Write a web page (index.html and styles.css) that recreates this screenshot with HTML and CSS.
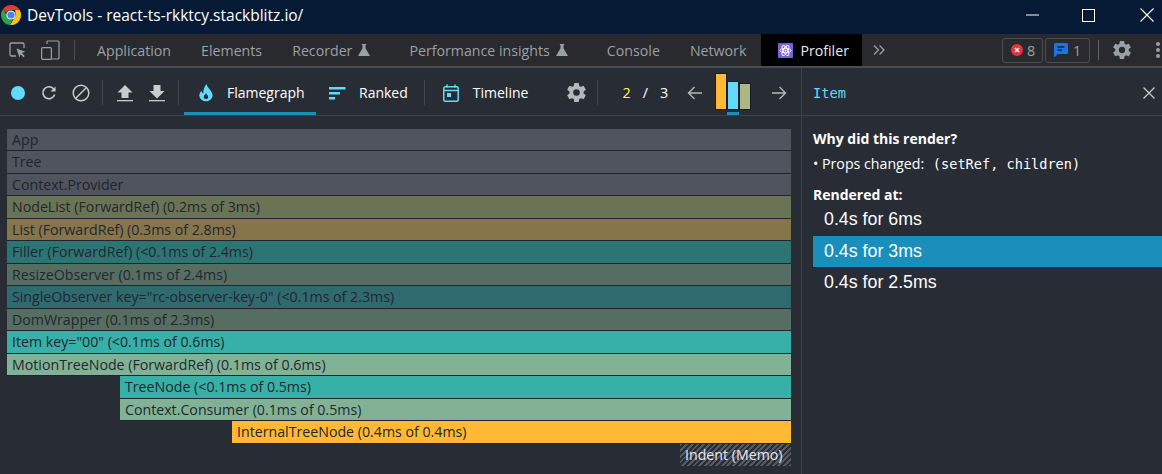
FILE: index.html
```html
<!DOCTYPE html>
<html lang="en">
<head>
<meta charset="utf-8">
<title>DevTools</title>
<link rel="stylesheet" href="styles.css">
</head>
<body>
<div class="app">
  <header class="titlebar">
    <svg class="chrome" viewBox="0 0 20 20" width="20" height="20">
      <path d="M10 0a10 10 0 0 1 8.660 5H10a5 5 0 0 0-4.500 2.900L2.200 3.800A10 10 0 0 1 10 0z" fill="#e33b2e"/>
      <path d="M18.660 5A10 10 0 0 1 9 19.950l4.300-6.900A5 5 0 0 0 14.400 7.400 5 5 0 0 0 14 5z" fill="#fbc116"/>
      <path d="M9 19.950A10 10 0 0 1 2.200 3.800l4 6.900a5 5 0 0 0 5.600 3.950L9 19.950z" fill="#2ba24c"/>
      <circle cx="10" cy="10" r="4.600" fill="#fff"/>
      <circle cx="10" cy="10" r="3.600" fill="#4285f4"/>
    </svg>
    <span class="title">DevTools - react-ts-rkktcy.stackblitz.io/</span>
    <div class="winctl">
      <svg class="wc-min" width="13" height="2" viewBox="0 0 13 2"><path d="M0 1h13" stroke="#fff" stroke-width="1"/></svg>
      <svg class="wc-max" width="13" height="13" viewBox="0 0 13 13"><rect x=".5" y=".5" width="12" height="12" fill="none" stroke="#fff"/></svg>
      <svg class="wc-close" width="14" height="14" viewBox="0 0 14 14"><path d="M.5.5l13 13M13.500.5l-13 13" stroke="#fff" stroke-width="1.100"/></svg>
    </div>
  </header>

  <nav class="tabbar">
    <svg class="dt-inspect" width="18" height="18" viewBox="0 0 18 18" fill="none"><path d="M7 15H2.500A1.500 1.500 0 0 1 1 13.500V3.500A1.500 1.500 0 0 1 2.500 2h11A1.500 1.500 0 0 1 15 3.500V7" stroke="#9aa0a6" stroke-width="1.300"/><path d="M7.500 7.500l9 3.200-3.700 1.300 3 3-1.300 1.300-3-3-1 3.500z" fill="#9aa0a6"/></svg>
    <svg class="dt-device" width="19" height="20" viewBox="0 0 19 20" fill="none" stroke="#9aa0a6" stroke-width="1.200"><path d="M6 4V2a1 1 0 0 1 1-1h10a1 1 0 0 1 1 1v16a1 1 0 0 1-1 1h-6"/><rect x=".6" y="7.600" width="9.800" height="11.800" rx="1"/></svg>
    <span class="vsep tab-sep"></span>
    <span class="tab tab-first">Application</span>
    <span class="tab">Elements</span>
    <span class="tab tab-exp"><span>Recorder</span><svg class="flask" width="12" height="12" viewBox="0 0 12 12"><path d="M3.800 0h4.400v1H7.500v3.300L12 12H0l4.500-7.700V1h-.7z" fill="#9aa0a6"/></svg></span>
    <span class="tab tab-exp"><span>Performance insights</span><svg class="flask" width="12" height="12" viewBox="0 0 12 12"><path d="M3.800 0h4.400v1H7.500v3.300L12 12H0l4.500-7.700V1h-.7z" fill="#9aa0a6"/></svg></span>
    <span class="tab">Console</span>
    <span class="tab">Network</span>
    <span class="tab-active">
      <svg width="15" height="15" viewBox="0 0 15 15"><rect width="15" height="15" rx="1" fill="#7a5fd6"/><g fill="none" stroke="#fff" stroke-width=".9"><ellipse cx="7.500" cy="7.500" rx="5.500" ry="2.200"/><ellipse cx="7.500" cy="7.500" rx="5.500" ry="2.200" transform="rotate(60 7.500 7.500)"/><ellipse cx="7.500" cy="7.500" rx="5.500" ry="2.200" transform="rotate(120 7.500 7.500)"/></g><circle cx="7.500" cy="7.500" r="1.100" fill="#fff"/></svg>
      <span>Profiler</span>
    </span>
    <svg class="more" width="12" height="10" viewBox="0 0 12 10" fill="none" stroke="#9aa0a6" stroke-width="1.300"><path d="M1 .5L5.500 5 1 9.500M6.500.5L11 5l-4.500 4.500"/></svg>
    <div class="tab-right">
      <span class="badge badge-err">
        <svg width="12" height="12" viewBox="0 0 12 12"><circle cx="6" cy="6" r="6" fill="#e8333c"/><path d="M4 4l4 4M8 4l-4 4" stroke="#fff" stroke-width="1.400"/></svg>
        <span>8</span>
      </span>
      <span class="badge badge-msg">
        <svg width="14" height="14" viewBox="0 0 14 14"><path d="M1.500 0h11A1.500 1.500 0 0 1 14 1.500v8a1.500 1.500 0 0 1-1.500 1.500H4l-4 3.500v-13A1.500 1.500 0 0 1 1.500 0z" fill="#1a73e8"/><path d="M3.500 4h7M3.500 7h4.500" stroke="#202124" stroke-width="1.300"/></svg>
        <span>1</span>
      </span>
      <span class="vsep sep-right"></span>
      <svg class="gear-top" width="18" height="18" viewBox="2 2 20 20"><path fill="#9aa0a6" d="M19.430 12.980c.04-.32.07-.64.07-.98s-.03-.66-.07-.98l2.110-1.650a.5.5 0 0 0 .12-.64l-2-3.460a.5.5 0 0 0-.61-.22l-2.490 1a7.300 7.300 0 0 0-1.690-.98l-.38-2.650A.49.490 0 0 0 14 2h-4a.49.490 0 0 0-.49.420l-.38 2.650c-.61.250-1.170.590-1.690.98l-2.490-1a.49.490 0 0 0-.61.220l-2 3.460a.49.490 0 0 0 .12.640l2.110 1.650c-.04.320-.07.650-.07.980s.03.660.07.980l-2.110 1.650a.5.5 0 0 0-.12.640l2 3.460a.5.5 0 0 0 .61.220l2.490-1c.52.400 1.080.730 1.690.98l.38 2.650c.03.240.24.420.49.420h4c.25 0 .46-.18.490-.42l.38-2.650c.61-.25 1.170-.59 1.690-.98l2.490 1a.49.490 0 0 0 .61-.22l2-3.460a.5.5 0 0 0-.12-.64l-2.110-1.650zM12 15.500a3.500 3.500 0 1 1 0-7 3.500 3.500 0 0 1 0 7z"/></svg>
      <svg class="dots" width="4" height="18" viewBox="0 0 4 18"><circle cx="2" cy="3" r="2" fill="#9aa0a6"/><circle cx="2" cy="9" r="2" fill="#9aa0a6"/><circle cx="2" cy="15" r="2" fill="#9aa0a6"/></svg>
    </div>
  </nav>

  <main class="workspace">
    <section class="left">
      <div class="toolbar">
        <span class="record"></span>
        <svg class="ic ic-reload" width="16" height="16" viewBox="0 0 16 16" fill="none" stroke="#c8cbd0" stroke-width="1.600"><path d="M13.700 9.500A6 6 0 1 1 12.500 3.800L14 5.500"/><path d="M14.500 1.500V6.500H9.500" fill="#c8cbd0" stroke="none"/></svg>
        <svg class="ic ic-block" width="18" height="18" viewBox="0 0 18 18" fill="none" stroke="#c8cbd0" stroke-width="1.500"><circle cx="9" cy="9" r="7.800"/><path d="M3.500 14.500l11-11"/></svg>
        <span class="vsep tb-sep1"></span>
        <svg class="ic ic-up" width="16" height="18" viewBox="0 0 16 18" fill="#c8cbd0"><path d="M8 1l7.500 7.500H11.500V14H4.500V8.500H.5z"/><path d="M0 16h16v1.300H0z"/></svg>
        <svg class="ic ic-down" width="16" height="18" viewBox="0 0 16 18" fill="#c8cbd0"><path d="M4.500 1h7v6h4L8 14.500.5 7h4z"/><path d="M0 16h16v1.300H0z"/></svg>
        <span class="vsep tb-sep2"></span>
        <div class="ptab ptab-active">
          <svg width="14" height="18" viewBox="0 0 14 18"><path fill="#61dafb" d="M7.500 0c.6 2.800 2.200 4 3.700 6 1.300 1.700 2.400 3.800 2.400 6a6.700 6 0 0 1-13.300 0c0-2.200 1-4 2.300-5.300.1 1.300.6 2.300 1.500 2.800C4.300 5.800 5.400 2.500 7.500 0z"/><path fill="#282c34" d="M7 9c.4 1.200 1.200 1.800 1.800 2.800.9 1.400.3 3.200-1.800 3.200s-2.800-1.700-2-3.200C5.700 10.800 6.700 10 7 9z"/></svg>
          <span>Flamegraph</span>
        </div>
        <div class="ptab">
          <svg width="17" height="14" viewBox="0 0 17 14" fill="#61dafb"><path d="M0 1h16.500v2.400H0zM0 6h11v2.400H0zM0 11h6v2.400H0z"/></svg>
          <span>Ranked</span>
        </div>
        <span class="vsep tb-sep3"></span>
        <div class="ptab ptab-time">
          <svg width="16" height="18" viewBox="0 0 16 18" fill="none" stroke="#61dafb" stroke-width="1.500"><rect x=".8" y="2.800" width="14.400" height="14.400" rx="1.500"/><path d="M.8 6.500h14.400M4 .5v3M12 .5v3"/><rect x="4" y="9" width="4" height="4" fill="#61dafb" stroke="none"/></svg>
          <span>Timeline</span>
        </div>
        <svg class="gear-tb" width="19" height="19" viewBox="2 2 20 20"><path fill="#b4b7bc" d="M19.430 12.980c.04-.32.07-.64.07-.98s-.03-.66-.07-.98l2.110-1.650a.5.5 0 0 0 .12-.64l-2-3.460a.5.5 0 0 0-.61-.22l-2.490 1a7.300 7.300 0 0 0-1.690-.98l-.38-2.650A.49.490 0 0 0 14 2h-4a.49.490 0 0 0-.49.420l-.38 2.650c-.61.250-1.170.590-1.690.98l-2.490-1a.49.490 0 0 0-.61.220l-2 3.460a.49.490 0 0 0 .12.640l2.110 1.650c-.04.320-.07.650-.07.980s.03.660.07.980l-2.110 1.650a.5.5 0 0 0-.12.640l2 3.460a.5.5 0 0 0 .61.220l2.490-1c.52.400 1.080.730 1.690.98l.38 2.650c.03.240.24.420.49.420h4c.25 0 .46-.18.490-.42l.38-2.650c.61-.25 1.170-.59 1.690-.98l2.490 1a.49.490 0 0 0 .61-.22l2-3.460a.5.5 0 0 0-.12-.64l-2.110-1.650zM12 15.500a3.500 3.500 0 1 1 0-7 3.500 3.500 0 0 1 0 7z"/></svg>
        <span class="vsep tb-sep4"></span>
        <div class="pager"><span class="pg-cur">2</span><span>/</span><span>3</span></div>
        <svg class="arrow-l" width="16" height="14" viewBox="0 0 16 14" fill="none" stroke="#b4b7bc" stroke-width="1.400"><path d="M15 7H1.500M7.500 1l-6 6 6 6"/></svg>
        <div class="snap">
          <span class="snap-bar snap-a"></span>
          <span class="snap-bar snap-b"></span>
          <span class="snap-bar snap-c"></span>
        </div>
        <svg class="arrow-r" width="16" height="14" viewBox="0 0 16 14" fill="none" stroke="#b4b7bc" stroke-width="1.400"><path d="M1 7h13.500M8.500 1l6 6-6 6"/></svg>
      </div>
      <div class="chart">
        <div class="bar c-none">App</div>
        <div class="bar c-none">Tree</div>
        <div class="bar c-none">Context.Provider</div>
        <div class="bar c-olive">NodeList (ForwardRef) (0.2ms of 3ms)</div>
        <div class="bar c-brown">List (ForwardRef) (0.3ms of 2.8ms)</div>
        <div class="bar c-teal">Filler (ForwardRef) (&lt;0.1ms of 2.4ms)</div>
        <div class="bar c-sage">ResizeObserver (0.1ms of 2.4ms)</div>
        <div class="bar c-teal2">SingleObserver key="rc-observer-key-0" (&lt;0.1ms of 2.3ms)</div>
        <div class="bar c-sage">DomWrapper (0.1ms of 2.3ms)</div>
        <div class="bar c-aqua">Item key="00" (&lt;0.1ms of 0.6ms)</div>
        <div class="bar c-mint">MotionTreeNode (ForwardRef) (0.1ms of 0.6ms)</div>
        <div class="bar c-aqua in-1">TreeNode (&lt;0.1ms of 0.5ms)</div>
        <div class="bar c-mint in-1">Context.Consumer (0.1ms of 0.5ms)</div>
        <div class="bar c-amber in-2">InternalTreeNode (0.4ms of 0.4ms)</div>
        <div class="bar c-hatch">Indent (Memo)</div>
      </div>
    </section>
    <aside class="side">
      <div class="side-head">
        <span class="side-name">Item</span>
        <svg width="12" height="12" viewBox="0 0 12 12"><path d="M.5.5l11 11M11.500.5l-11 11" stroke="#c8cbd0" stroke-width="1.300"/></svg>
      </div>
      <div class="side-body">
        <div class="why">Why did this render?</div>
        <div class="props">• Props changed: <code>(setRef, children)</code></div>
        <div class="at">Rendered at:</div>
        <ul class="renders">
          <li>0.4s for 6ms</li>
          <li class="sel">0.4s for 3ms</li>
          <li>0.4s for 2.5ms</li>
        </ul>
      </div>
    </aside>
  </main>
</div>
</body>
</html>
```

FILE: styles.css
```css
* { box-sizing: border-box; }
html, body { margin: 0; padding: 0; height: 100%; overflow: hidden; }
body { background: #282c34; font-family: "Open Sans", "Noto Sans", sans-serif; }
svg { display: block; flex: none; }
.app { width: 1162px; height: 474px; display: flex; flex-direction: column; }

.titlebar { height: 34px; flex: none; background: #061a36; color: #fff; display: flex; align-items: center; padding: 0 0 4px 1px; }
.chrome { margin-right: 6px; }
.title { font-size: 15.500px; }
.winctl { margin-left: auto; display: flex; align-items: center; }
.wc-min { margin-right: 43px; }
.wc-max { margin-right: 45px; }
.wc-close { margin-right: 8px; }

.tabbar { height: 34px; flex: none; background: #292a2d; border-bottom: 2px solid #494c50; display: flex; align-items: center; color: #9aa0a6; font-size: 14.200px; padding-left: 9px; }
.dt-inspect { margin-right: 14px; }
.dt-device { margin-right: 14px; }
.vsep { display: block; width: 1px; background: #4b4e53; flex: none; }
.tab-sep { height: 20px; }
.tab { padding: 0 15px; display: flex; align-items: center; white-space: nowrap; }
.tab-first { margin-left: 7px; }
.tab-exp { padding-right: 24px; gap: 6px; }
.flask { margin-top: -1px; }
.tab-active { background: #000; color: #e8eaed; height: 32px; width: 101px; padding-left: 17px; display: flex; align-items: center; gap: 7px; }
.more { margin-left: 11px; }
.tab-right { margin-left: auto; display: flex; align-items: center; }
.badge { height: 25px; border: 1px solid #4b4e53; border-radius: 3px; display: flex; align-items: center; gap: 4px; font-size: 14.400px; padding: 0 8px; margin-right: 2px; }
.badge-err { width: 41px; }
.badge-msg { width: 45px; gap: 5px; }
.sep-right { height: 20px; background: #5f6368; margin-left: 6px; margin-right: 14px; }
.gear-top { margin-right: 25px; }
.dots { margin-right: 2px; }

.workspace { flex: 1; display: flex; min-height: 0; }
.left { width: 802px; flex: none; display: flex; flex-direction: column; border-right: 1px solid #3d4149; }
.side { flex: 1; display: flex; flex-direction: column; min-width: 0; }

.toolbar { height: 48px; flex: none; border-bottom: 1px solid #3d4149; display: flex; align-items: center; padding: 2px 0 0 11px; color: #fff; font-size: 14px; }
.record { width: 14px; height: 14px; border-radius: 50%; background: #61dafb; margin-right: 16px; flex: none; }
.ic-reload { margin-right: 15px; }
.ic-block { margin-right: 12px; }
.tb-sep1, .tb-sep2, .tb-sep3, .tb-sep4 { height: 25px; background: #41454d; }
.tb-sep1 { margin-right: 14px; }
.ic-up { margin-right: 16px; }
.ic-down { margin-right: 13px; }
.tb-sep2 { margin-right: 5px; }
.ptab { height: 45px; display: flex; align-items: center; gap: 13px; }
.ptab-active { width: 132px; padding-left: 15px; border-bottom: 3px solid #1a8fbb; gap: 14px; margin-right: 13px; padding-top: 3px; }
.ptab-time { gap: 14px; margin-left: 18px; }
.tb-sep3 { margin-left: 16px; }
.gear-tb { margin-left: 39px; }
.tb-sep4 { margin-left: 11px; }
.pager { display: flex; gap: 12px; margin-left: 24px; width: 65px; font-size: 14.400px; }
.pg-cur { color: #ffff40; }
.snap { height: 37px; display: flex; align-items: flex-end; margin-left: 12px; margin-bottom: 2px; }
.snap-bar { display: block; width: 12px; border: 1px solid #1b1e24; }
.snap-a { height: 37px; background: #ffb935; }
.snap-b { height: 29px; background: #61dafb; box-shadow: 0 2px 0 #282c34, 0 5px 0 #1a8fbb; }
.snap-c { height: 27px; background: #aab786; }
.arrow-r { margin-left: 20px; }

.chart { flex: 1; display: flex; flex-direction: column; padding: 12.500px 10px 0 7px; }
.bar { height: 22.500px; flex: none; padding-left: 5px; font-size: 14.200px; line-height: 22px; color: #23272f; white-space: nowrap; border-bottom: 1px solid #20242c; overflow: hidden; }
.in-1 { margin-left: 113px; }
.in-2 { margin-left: 225px; }
.c-none { background: #50545f; color: #20242c; }
.c-olive { background: #6a7356; }
.c-brown { background: #86754a; }
.c-teal { background: #2b7675; }
.c-sage { background: #556e61; }
.c-teal2 { background: #2f6a6f; }
.c-aqua { background: #37b0a8; }
.c-mint { background: #82b296; }
.c-amber { background: #ffb935; }
.c-hatch { align-self: flex-end; width: 111px; color: #e6e8ec; border-bottom: 0; padding-left: 5px; background: repeating-linear-gradient(-45deg, #555963 0 2px, #282c34 2px 4px); }

.side-head { height: 48px; flex: none; border-bottom: 1px solid #3d4149; display: flex; align-items: center; justify-content: space-between; padding: 2px 7px 0 11px; }
.side-name { font-family: "DejaVu Sans Mono", "Liberation Mono", monospace; font-size: 13.700px; color: #61dafb; }
.side-body { padding: 14px 0 0 11px; color: #fff; }
.why, .at { font-weight: 700; font-size: 14px; line-height: 17px; }
.props { font-size: 14.200px; line-height: 17px; margin-top: 8px; }
.props code { font-family: "DejaVu Sans Mono", "Liberation Mono", monospace; font-size: 13.600px; margin-left: 5px; }
.at { margin-top: 13px; }
.renders { list-style: none; margin: 1px 0 0; padding: 0; }
.renders li { height: 31.500px; padding-left: 11px; font-family: "Liberation Sans", Arial, sans-serif; font-size: 17.800px; line-height: 30px; }
.renders .sel { background: #1a8fbb; }
```
